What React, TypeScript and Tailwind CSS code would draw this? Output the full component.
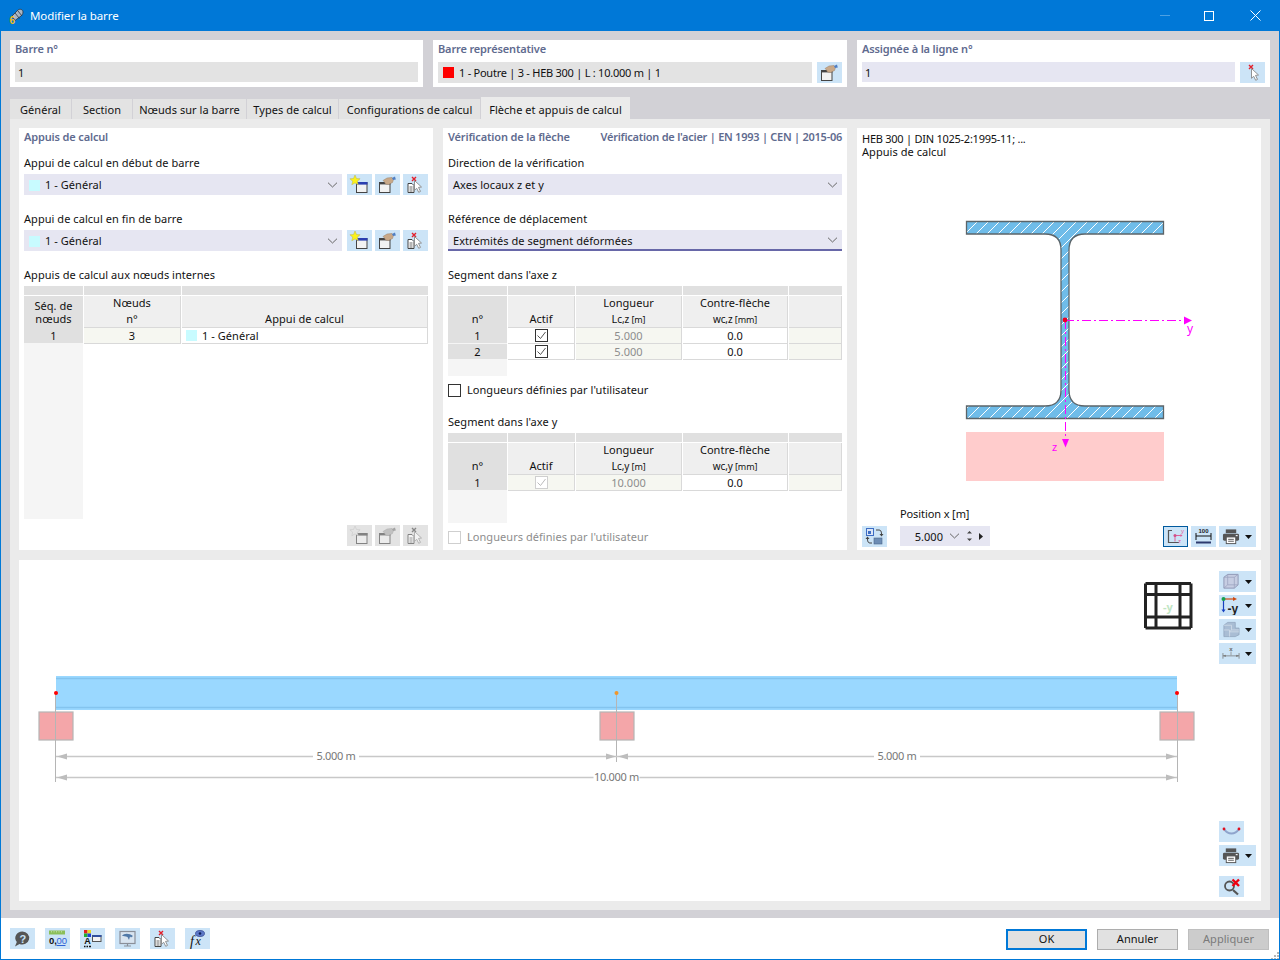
import React from "react";

const Chevron = () => (
  <svg width="11" height="6" viewBox="0 0 11 6" className="shrink-0"><path d="M1 .7 5.5 5 10 .7" fill="none" stroke="#666" strokeWidth="1" /></svg>
);
const Drop = () => (
  <svg width="7" height="4" viewBox="0 0 7 4" className="shrink-0"><path d="M0 0h7L3.500 4z" fill="#111" /></svg>
);

const IconNew = () => (
  <svg width="25" height="21" viewBox="0 0 25 21">
    <rect x="9.5" y="8.5" width="10.5" height="10" fill="#f2f2f2" stroke="#444" />
    <rect x="9" y="8" width="11.5" height="2.6" fill="#2b3fb0" />
    <path d="M8 1l1.5 3.5 3.6.3-2.8 2.4.9 3.6L8 8.9l-3.2 1.9.9-3.6-2.8-2.4 3.6-.3z" fill="#fbf21a" stroke="#b9b34a" strokeWidth=".5" />
  </svg>
);
const IconEdit = () => (
  <svg width="25" height="21" viewBox="0 0 25 21">
    <rect x="4.5" y="8.5" width="10.5" height="10" fill="#f2f2f2" stroke="#444" />
    <rect x="4" y="8" width="11.5" height="2.4" fill="#444" />
    <path d="M8 6.5l4-2.5 5-.5 1.5 2-1 3-4 2-3-.5-1-2z" fill="#c8a888" stroke="#9a8068" strokeWidth=".5" />
    <path d="M17 4l3-1.5.8 3-2.8.5z" fill="#4f7fc4" />
  </svg>
);
const IconPick = ({ doc = true }: { doc?: boolean }) => (
  <svg width="25" height="21" viewBox="0 0 25 21">
    {doc && (
      <g>
        <path d="M5 9.5h4l2 2v7H5z" fill="#fff" stroke="#444" />
        <path d="M6.5 13h3M6.5 15h3M6.5 17h3" stroke="#444" strokeWidth=".8" />
      </g>
    )}
    <path d="M9 3l4 4M13 3l-4 4" stroke="#e4202c" strokeWidth="1.4" />
    <path d="M11.5 6.5l7 6.5-3 .4 2 4-1.8.9-2-4-2.2 2z" fill="#fff" stroke="#888" strokeWidth=".9" />
  </svg>
);
const IconRotate = () => (
  <svg width="25" height="21" viewBox="0 0 25 21">
    <rect x="4.5" y="2.5" width="7" height="7" fill="#dbe6f6" stroke="#3d6dc4" />
    <rect x="6" y="5" width="3" height="3" fill="#3d6dc4" />
    <rect x="12" y="12" width="8" height="6" fill="#6d8db5" stroke="#4a658a" strokeWidth=".6" />
    <path d="M14 4h3c1.500 0 2.500 1 2.500 4" fill="none" stroke="#444" />
    <path d="M17.500 8l2 2.500 2-2.500z" fill="#444" />
    <path d="M10 17H8c-1.500 0-2.500-1-2.500-4" fill="none" stroke="#444" />
    <path d="M3.500 13l2-2.500 2 2.500z" fill="#444" />
  </svg>
);
const IconAxes = () => (
  <svg width="23" height="19" viewBox="0 0 23 19">
    <path d="M8 3.500H4.500v12H15" fill="none" stroke="#555" strokeWidth="1.200" />
    <path d="M11 8.500h7M11 8.500v6" stroke="#e0609a" strokeWidth="1" />
    <circle cx="11" cy="8.500" r="1.500" fill="#d0508a" />
    <path d="M16.500 7l2 1.500-2 1.500z" fill="#e0609a" />
    <text x="17" y="5.500" fontSize="6" fill="#e0609a" fontFamily="Liberation Sans">y</text>
    <text x="14" y="16" fontSize="6" fill="#e0609a" fontFamily="Liberation Sans">z</text>
  </svg>
);
const IconDim = () => (
  <svg width="25" height="21" viewBox="0 0 25 21">
    <text x="12.500" y="6.500" textAnchor="middle" fontSize="6" fontWeight="700" fill="#222" fontFamily="Liberation Sans">100</text>
    <path d="M5 7v7M20 7v7M5 10h15" stroke="#111" strokeWidth="1" />
    <rect x="5" y="15.500" width="15" height="2" fill="#2d3a6e" />
  </svg>
);
const IconPrint = () => (
  <svg width="18" height="17" viewBox="0 0 19 17">
    <rect x="4" y="1" width="11" height="4" fill="#555" />
    <rect x="1" y="5.500" width="17" height="7.500" rx="1.500" fill="#555" />
    <rect x="14.500" y="7" width="2" height="1.200" fill="#fff" />
    <rect x="4.500" y="9" width="10" height="7" fill="#fff" stroke="#555" />
    <path d="M6.500 11.500h6M6.500 13.500h6" stroke="#555" />
  </svg>
);
const IconCube = () => (
  <svg width="18" height="17" viewBox="0 0 19 17">
    <path d="M2 4l4-3h11v11l-4 3.500H2z" fill="#c6cde2" stroke="#8f97b5" />
    <path d="M2 4h11v11.500M13 4l4-3M6 1v11H17M6 12l-4 3.500" fill="none" stroke="#9aa2be" strokeWidth=".8" />
  </svg>
);
const IconAxisY = () => (
  <svg width="20" height="19" viewBox="0 0 20 19">
    <path d="M2.500 3v11" stroke="#1540c0" strokeWidth="1.200" />
    <path d="M.5 13.500h4l-2 3z" fill="#1540c0" />
    <path d="M3 3h10" stroke="#d04a10" strokeWidth="1.200" />
    <path d="M12 1l4 2-4 2z" fill="#d04a10" />
    <circle cx="2.500" cy="3" r="2" fill="#18a050" />
    <text x="6.500" y="16.500" fontSize="12" fontWeight="700" fill="#222" fontFamily="Liberation Sans">-y</text>
  </svg>
);
const IconBlocks = () => (
  <svg width="18" height="17" viewBox="0 0 19 17">
    <path d="M2 4l4-3h8v6h4v7l-4 2H2z" fill="#a9bdd4" stroke="#90a4bc" strokeWidth=".8" />
    <path d="M2 4h8v5h8M10 9l-2 2h10M2 9h6v7" fill="none" stroke="#d5dfea" strokeWidth=".8" />
  </svg>
);
const IconMeasure = () => (
  <svg width="18" height="17" viewBox="0 0 19 17">
    <text x="9.500" y="6" textAnchor="middle" fontSize="6.500" fontWeight="700" fill="#666" fontFamily="Liberation Sans">x</text>
    <path d="M1 8v6M18 8v6M1 11h17" stroke="#777" strokeWidth=".8" />
    <path d="M1 11l3-1.200v2.400zM18 11l-3-1.200v2.400z" fill="#777" />
    <path d="M9.500 6.500v4" stroke="#888" strokeWidth=".8" />
  </svg>
);
const IconCurve = () => (
  <svg width="25" height="21" viewBox="0 0 25 21">
    <path d="M5 8c4 6 11 6 15 0" fill="none" stroke="#8fa4cc" strokeWidth="2" />
    <circle cx="5" cy="8" r="1.400" fill="#e01020" />
    <circle cx="20" cy="8" r="1.400" fill="#e01020" />
  </svg>
);
const IconZoomX = () => (
  <svg width="25" height="21" viewBox="0 0 25 21">
    <circle cx="10.500" cy="10" r="4.500" fill="none" stroke="#555" strokeWidth="1.800" />
    <path d="M14 14l5 4.500" stroke="#555" strokeWidth="2.200" />
    <path d="M13.500 3.500l6.500 6.500M20 3.500L13.500 10" stroke="#ee0010" strokeWidth="2.400" />
  </svg>
);
const IconHelp = () => (
  <svg width="25" height="21" viewBox="0 0 25 21">
    <path d="M12.500 3.500a7 6.500 0 1 1-3 12.500L5 18.500l1.800-4.500a7 6.500 0 0 1 5.700-10.500z" fill="#555" />
    <text x="13" y="14.500" textAnchor="middle" fontSize="11" fontWeight="700" fill="#c9e2f7" fontFamily="Liberation Sans">?</text>
  </svg>
);
const IconUnits = () => (
  <svg width="25" height="21" viewBox="0 0 25 21">
    <rect x="4" y="2.500" width="16" height="4" fill="#8bbf5a" />
    <path d="M6.500 3v1.500M9 3v1.500M11.500 3v1.500M14 3v1.500M16.500 3v1.500" stroke="#cde3b4" strokeWidth=".7" />
    <text x="4" y="15.500" fontSize="9.500" fontWeight="700" fill="#111" fontFamily="Liberation Sans">0,</text>
    <text x="11.500" y="15.500" fontSize="9.500" fill="#2e62d6" fontFamily="Liberation Sans">00</text>
    <path d="M11.500 17.500h9" stroke="#2e62d6" />
  </svg>
);
const IconColors = () => (
  <svg width="25" height="21" viewBox="0 0 25 21">
    <rect x="4" y="2" width="3.500" height="3.500" fill="#e02020" />
    <rect x="7.500" y="2" width="3.500" height="3.500" fill="#e8d820" />
    <rect x="4" y="5.500" width="3.500" height="3.500" fill="#20b030" />
    <rect x="7.500" y="5.500" width="3.500" height="3.500" fill="#2040d0" />
    <text x="7.500" y="16" textAnchor="middle" fontSize="9" fontWeight="700" fill="#111" fontFamily="Liberation Sans">A</text>
    <path d="M4 18.500h1.500M6.500 18.500h1.500M9 18.500h2" stroke="#111" strokeWidth="1.500" />
    <rect x="12.500" y="7.500" width="8.500" height="6" fill="#f3f3f3" stroke="#555" />
    <rect x="12.500" y="7" width="9" height="2" fill="#3050a0" />
  </svg>
);
const IconScreen = () => (
  <svg width="25" height="21" viewBox="0 0 25 21">
    <rect x="5" y="3.500" width="15" height="12" fill="#d8e4f0" stroke="#8a8f99" strokeWidth="1.200" />
    <path d="M7 8c2-3 7-3 11 0l-2 1.500-1-1-1 3.500-1.500-3c-2-1-4-1-5.500-1z" fill="#5079a8" />
    <path d="M12.500 15.500v2M9 18h7" stroke="#8a8f99" strokeWidth="1.200" />
  </svg>
);
const IconFx = () => (
  <svg width="25" height="21" viewBox="0 0 25 21">
    <text x="5" y="18" fontSize="14" fontStyle="italic" fontFamily="Liberation Serif" fill="#111">f</text>
    <text x="10.500" y="17" fontSize="12" fontStyle="italic" fontFamily="Liberation Serif" fill="#111">x</text>
    <ellipse cx="15" cy="5.500" rx="4.500" ry="3" fill="#5d79c8" stroke="#2d3f8a" strokeWidth=".7" />
    <circle cx="15" cy="5.500" r="1.300" fill="#10205a" />
  </svg>
);

const Btn = ({ children, off = false, on = false }: { children: React.ReactNode; off?: boolean; on?: boolean }) => (
  <div className={"flex h-[21px] w-[25px] shrink-0 items-center justify-center overflow-hidden " + (off ? "bg-[#e3e3e3]" : on ? "border-[1.5px] border-[#005a9e] bg-[#cce4f7]" : "bg-[#cce4f7]")}>
    {off ? <div className="flex opacity-60 grayscale">{children}</div> : children}
  </div>
);
const DropBtn = ({ children }: { children: React.ReactNode }) => (
  <div className="flex h-[21px] w-[37px] shrink-0 items-center justify-between bg-[#cce4f7] pl-[1px] pr-[4px]">
    <div className="flex w-[22px] justify-center">{children}</div>
    <Drop />
  </div>
);
const Swatch = () => <span className="h-[11px] w-[11px] shrink-0 bg-[#c8fbff]" />;

const Label = ({ children }: { children: React.ReactNode }) => <div className="h-[15px] text-[11px] leading-[13px] text-[#111]">{children}</div>;
const Heading = ({ children, tight = false }: { children: React.ReactNode; tight?: boolean }) => <div className={"whitespace-nowrap text-[11px] font-semibold leading-[13px] text-[#5f6b8f] " + (tight ? "tracking-[-0.25px]" : "tracking-[-0.15px]")}>{children}</div>;

const Combo = ({ children, active = false }: { children: React.ReactNode; active?: boolean }) => (
  <div className={"flex h-[21px] min-w-0 flex-1 items-center bg-[#e6e6f2] pl-[5px] pr-[4px] text-[11px] text-[#111] " + (active ? "border-b-2 border-[#6767a8]" : "")}>
    <div className={"flex flex-1 items-center gap-[5px] " + (active ? "pt-[4px]" : "pt-[2px]")}>{children}</div>
    <Chevron />
  </div>
);

const TopGroup = ({ title, children }: { title: string; children: React.ReactNode }) => (
  <div className="h-[47px] bg-white px-[5px] pt-[2px]">
    <div className="h-[15px]"><Heading>{title}</Heading></div>
    <div className="mt-[5px] flex gap-[5px]">{children}</div>
  </div>
);

const Sub = ({ main, sub, unit }: { main: string; sub: string; unit: string }) => (
  <span className="text-[11px] tracking-[-0.1px]">
    {main}
    <span className="text-[10px]">{sub}</span>
    <span className="text-[9px]"> {unit}</span>
  </span>
);

const Check = ({ on = false, off = false }: { on?: boolean; off?: boolean }) => (
  <span className={"flex h-[13px] w-[13px] items-center justify-center border bg-white " + (off ? "border-[#cfcfcf]" : "border-[#333]")}>
    {on && (
      <svg width="11" height="11" viewBox="0 0 11 11"><path d="M1.500 5.500 4.500 8.500 9.500 2" fill="none" stroke={off ? "#bbb" : "#555"} strokeWidth="1" /></svg>
    )}
  </span>
);

const Strip = () => <div className="h-[9px] bg-[#e0e0e0]" />;

const Head = ({ top, bottom }: { top?: React.ReactNode; bottom?: React.ReactNode }) => (
  <div className="flex h-[32px] flex-col items-center justify-end border-b border-r border-[#d9d9d9] bg-[#efefef] text-[11px] leading-[16px] text-[#111]">
    {top && <div className="h-[16px]">{top}</div>}
    <div className="h-[16px]">{bottom}</div>
  </div>
);

const RowNum = ({ n }: { n: string }) => <div className="flex h-[16px] items-center justify-center border-b border-[#f5f5f5] bg-[#e0e0e0] pt-[1px] text-[11px] text-[#111]">{n}</div>;

const Cell = ({ children, tone = "white", className = "" }: { children?: React.ReactNode; tone?: "white" | "cream"; className?: string }) => (
  <div className={"flex h-[16px] items-center justify-center border-b border-r border-[#d9d9d9] text-[11px] " + (tone === "cream" ? "bg-[#f6f7f1] " : "bg-white ") + className}>{children}</div>
);

const SegmentTable = ({ axis, rows, fill }: { axis: string; rows: { n: string; len: string; off: boolean }[]; fill: string }) => (
  <div>
    <div className="grid grid-cols-[59px_67px_106px_105px_53px] gap-x-[1px]">
      <Strip /><Strip /><Strip /><Strip /><Strip />
      <div className="mt-[1px] flex h-[32px] items-end justify-center bg-[#e0e0e0] pb-[1px] text-[11px] leading-[16px] text-[#111]">n°</div>
      <div className="mt-[1px]"><Head bottom="Actif" /></div>
      <div className="mt-[1px]"><Head top="Longueur" bottom={<Sub main="L" sub={"c," + axis} unit="[m]" />} /></div>
      <div className="mt-[1px]"><Head top="Contre-flèche" bottom={<Sub main="" sub={"wc," + axis} unit="[mm]" />} /></div>
      <div className="mt-[1px]"><Head /></div>
      {rows.map((r) => (
        <React.Fragment key={r.n}>
          <RowNum n={r.n} />
          <Cell tone={r.off ? "cream" : "white"}><Check on off={r.off} /></Cell>
          <Cell tone="cream" className="pt-[2px] text-[#8d8d8d]">{r.len}</Cell>
          <Cell className="pt-[2px] text-[#111]">0.0</Cell>
          <Cell tone="cream" />
        </React.Fragment>
      ))}
    </div>
    <div className={"w-[59px] bg-[#f5f5f5] " + fill} />
  </div>
);

const SectionDrawing = () => (
  <svg width="404" height="346" viewBox="857 159 404 346" className="mt-[1px] block">
    <defs>
      <pattern id="hatch" width="11" height="11" patternUnits="userSpaceOnUse">
        <path d="M-1 12 12 -1" stroke="#fff" strokeWidth="1" />
      </pattern>
    </defs>
    <rect x="966" y="432" width="198" height="49" fill="#ffcccc" />
    <path d="M966.500 221.500H1163.500V234H1085Q1069 234 1069 250V390Q1069 406 1085 406H1163.500V418.500H966.500V406H1045Q1061 406 1061 390V250Q1061 234 1045 234H966.500Z" fill="#6fbce9" />
    <path d="M966.500 221.500H1163.500V234H1085Q1069 234 1069 250V390Q1069 406 1085 406H1163.500V418.500H966.500V406H1045Q1061 406 1061 390V250Q1061 234 1045 234H966.500Z" fill="url(#hatch)" stroke="#5c6468" strokeWidth="1.300" />
    <path d="M1065 320.500H1186" stroke="#ff00ff" strokeWidth="1" strokeDasharray="9 3 2 3" />
    <path d="M1184 316.500l8 4-8 4z" fill="#ff00ff" />
    <path d="M1065.500 320V440" stroke="#ff00ff" strokeWidth="1" strokeDasharray="9 3 2 3" />
    <path d="M1062 439h7l-3.500 8.500z" fill="#ff00ff" />
    <circle cx="1065" cy="320" r="2.400" fill="#ee0020" />
    <text x="1187" y="333" fontSize="12" fill="#ff00ff" fontFamily="Noto Sans">y</text>
    <text x="1052" y="451" fontSize="11" fill="#ff00ff" fontFamily="Noto Sans">z</text>
  </svg>
);

const DimLabel = ({ x, y, t }: { x: number; y: number; t: string }) => (
  <g>
    <rect x={x - 23} y={y - 7} width="46" height="14" fill="#fff" />
    <text x={x} y={y + 4} textAnchor="middle" fontSize="11" letterSpacing="-0.3" fill="#777" fontFamily="Noto Sans">{t}</text>
  </g>
);

const Support = ({ x }: { x: number }) => <rect x={x - 17} y="712" width="34" height="28" fill="#f4a6a9" stroke="#b5b5b5" strokeWidth="1.200" />;
const ArrowL = ({ x, y }: { x: number; y: number }) => <path d={`M${x} ${y}l10-3v6z`} fill="#bdbdbd" />;
const ArrowR = ({ x, y }: { x: number; y: number }) => <path d={`M${x} ${y}l-10-3v6z`} fill="#bdbdbd" />;

const BeamDrawing = () => (
  <svg width="1242" height="341" viewBox="19 560 1242 341" className="block">
    <rect x="56" y="676" width="1121" height="34" fill="#9ad8ff" />
    <path d="M56 678.500H1177M56 707.500H1177" stroke="#84c4ee" strokeWidth="1.500" />
    <Support x={56} /><Support x={617} /><Support x={1177} />
    <path d="M55.500 693V782M616.500 693V762M1177.500 693V782" stroke="#b5b5b5" strokeWidth="1" />
    <path d="M56 756.500H1177M56 777.500H1177" stroke="#c8c8c8" strokeWidth="1.500" />
    <ArrowL x={57} y={756.5} /><ArrowR x={616} y={756.5} /><ArrowL x={618} y={756.5} /><ArrowR x={1176} y={756.5} />
    <ArrowL x={57} y={777.5} /><ArrowR x={1176} y={777.5} />
    <DimLabel x={336} y={756} t="5.000 m" />
    <DimLabel x={897} y={756} t="5.000 m" />
    <DimLabel x={616.500} y={777} t="10.000 m" />
    <circle cx="56" cy="693" r="2" fill="#f00" />
    <circle cx="616.500" cy="693" r="2" fill="#f0962a" />
    <circle cx="1177" cy="693" r="2" fill="#f00" />
    <path d="M1145.500 583.500H1191M1145.500 594.500H1191M1145.500 617H1191M1145.500 628H1191M1145.500 583.500V628M1156 583.500V628M1180 583.500V628M1191 583.500V628" fill="none" stroke="#222" strokeWidth="3" />
    <text x="1168" y="611" textAnchor="middle" fontSize="11" fontWeight="700" fill="#bfe6c4" fontFamily="Noto Sans">-y</text>
  </svg>
);

const Tab = ({ children, w, active = false }: { children: string; w: string; active?: boolean }) => (
  <div className={"flex items-center justify-center text-[11px] text-[#111] " + w + (active ? " h-[22px] bg-[#ebebeb] pt-[4px]" : " h-[20px] bg-[#e3e3e3] pt-[2px]")}>{children}</div>
);

export default function App() {
  return (
    <div className="flex h-[960px] w-[1280px] flex-col overflow-hidden border-x border-b border-[#0078d7] bg-white font-['Noto_Sans','Liberation_Sans',sans-serif] tracking-[0.05px]">
      <div className="flex h-[31px] shrink-0 items-center bg-[#0078d7] pl-[8px]">
        <svg width="16" height="16" viewBox="0 0 16 16" className="shrink-0">
          <path d="M3 8l6-6c2-1.500 5-.5 5 2 0 2-1 3-2 4l-6 4.500z" fill="#aab6c4" stroke="#2c343f" strokeWidth=".8" />
          <path d="M6 5l4.500 5.500M9 3l4 5" stroke="#2c343f" strokeWidth=".8" />
          <text x="0.500" y="15.500" fontSize="10" fontWeight="700" fill="#efbc1c" fontFamily="Liberation Sans">6</text>
        </svg>
        <span className="ml-[5px] text-[11.5px] tracking-[-0.1px] text-white">Modifier la barre</span>
        <div className="ml-auto flex items-center">
          <div className="mr-[34px] h-px w-[10px] bg-[#4da1e3]" />
          <div className="mr-[36px] h-[10px] w-[10px] border border-white" />
          <svg width="11" height="11" viewBox="0 0 11 11" className="mr-[18px]"><path d="M.5.500l10 10M10.500.500l-10 10" stroke="#fff" strokeWidth="1" /></svg>
        </div>
      </div>

      <div className="flex flex-1 flex-col bg-[#d2d1d6] px-[9px] pb-[8px] pt-[9px]">
        <div className="grid grid-cols-[413px_414px_413px] gap-x-[10px]">
          <TopGroup title="Barre n°">
            <div className="flex h-[20px] flex-1 items-center bg-[#e3e3e3] pl-[3px] pt-[2px] text-[11px] text-[#111]">1</div>
          </TopGroup>
          <TopGroup title="Barre représentative">
            <div className="flex h-[21px] flex-1 items-center gap-[5px] bg-[#e3e3e3] pl-[5px] text-[11px] tracking-[-0.25px] text-[#111]">
              <span className="h-[11px] w-[11px] bg-[#f00]" /><span className="pt-[2px]">1 - Poutre | 3 - HEB 300 | L : 10.000 m | 1</span>
            </div>
            <Btn><IconEdit /></Btn>
          </TopGroup>
          <TopGroup title="Assignée à la ligne n°">
            <div className="flex h-[20px] flex-1 items-center bg-[#e6e6f2] pl-[3px] pt-[2px] text-[11px] text-[#111]">1</div>
            <Btn><IconPick doc={false} /></Btn>
          </TopGroup>
        </div>

        <div className="mt-[10px] flex h-[22px] items-end gap-[1px]">
          <Tab w="w-[61px]">Général</Tab>
          <Tab w="w-[60px]">Section</Tab>
          <Tab w="w-[113px]">Nœuds sur la barre</Tab>
          <Tab w="w-[91px]">Types de calcul</Tab>
          <Tab w="w-[141px]">Configurations de calcul</Tab>
          <Tab w="w-[149px]" active>Flèche et appuis de calcul</Tab>
        </div>

        <div className="flex flex-1 flex-col gap-[10px] bg-[#ebebeb] p-[9px]">
          <div className="grid h-[422px] grid-cols-[414px_404px_404px] gap-x-[10px]">
            <div className="flex flex-col bg-white px-[5px] pt-[2px]">
              <div className="h-[15px]"><Heading>Appuis de calcul</Heading></div>
              <div className="mt-[11px]"><Label>Appui de calcul en début de barre</Label></div>
              <div className="mt-[3px] flex gap-[3px]">
                <div className="mr-[2px] flex flex-1"><Combo><Swatch /><span>1 - Général</span></Combo></div>
                <Btn><IconNew /></Btn><Btn><IconEdit /></Btn><Btn><IconPick /></Btn>
              </div>
              <div className="mt-[17px]"><Label>Appui de calcul en fin de barre</Label></div>
              <div className="mt-[3px] flex gap-[3px]">
                <div className="mr-[2px] flex flex-1"><Combo><Swatch /><span>1 - Général</span></Combo></div>
                <Btn><IconNew /></Btn><Btn><IconEdit /></Btn><Btn><IconPick /></Btn>
              </div>
              <div className="mt-[17px]"><Label>Appuis de calcul aux nœuds internes</Label></div>
              <div className="mt-[3px]">
                <div className="grid grid-cols-[59px_97px_246px] gap-x-[1px]">
                  <Strip /><Strip /><Strip />
                  <div className="mt-[1px] flex h-[32px] items-center justify-center bg-[#e0e0e0] text-center text-[11px] leading-[13px] text-[#111]">Séq. de<br />nœuds</div>
                  <div className="mt-[1px]"><Head top="Nœuds" bottom="n°" /></div>
                  <div className="mt-[1px]"><Head bottom="Appui de calcul" /></div>
                  <RowNum n="1" />
                  <Cell tone="cream" className="pt-[2px] text-[#111]">3</Cell>
                  <Cell className="justify-start gap-[5px] pl-[4px] text-[#111]"><Swatch /><span className="pt-[2px]">1 - Général</span></Cell>
                </div>
                <div className="h-[175px] w-[59px] bg-[#f5f5f5]" />
              </div>
              <div className="mt-[6px] flex justify-end gap-[3px]">
                <Btn off><IconNew /></Btn><Btn off><IconEdit /></Btn><Btn off><IconPick /></Btn>
              </div>
            </div>

            <div className="flex flex-col bg-white px-[5px] pt-[2px]">
              <div className="flex h-[15px] justify-between"><Heading>Vérification de la flèche</Heading><Heading tight>Vérification de l'acier | EN 1993 | CEN | 2015-06</Heading></div>
              <div className="mt-[11px]"><Label>Direction de la vérification</Label></div>
              <div className="mt-[3px] flex"><Combo>Axes locaux z et y</Combo></div>
              <div className="mt-[17px]"><Label>Référence de déplacement</Label></div>
              <div className="mt-[3px] flex"><Combo active>Extrémités de segment déformées</Combo></div>
              <div className="mt-[17px]"><Label>Segment dans l'axe z</Label></div>
              <div className="mt-[3px]">
                <SegmentTable axis="z" fill="h-[16px]" rows={[{ n: "1", len: "5.000", off: false }, { n: "2", len: "5.000", off: false }]} />
              </div>
              <div className="mt-[7px] flex h-[15px] items-center gap-[6px]">
                <Check /><span className="text-[11px] text-[#111]">Longueurs définies par l'utilisateur</span>
              </div>
              <div className="mt-[17px]"><Label>Segment dans l'axe y</Label></div>
              <div className="mt-[3px]">
                <SegmentTable axis="y" fill="h-[32px]" rows={[{ n: "1", len: "10.000", off: true }]} />
              </div>
              <div className="mt-[7px] flex h-[15px] items-center gap-[6px]">
                <Check off /><span className="text-[11px] text-[#8d8d8d]">Longueurs définies par l'utilisateur</span>
              </div>
            </div>

            <div className="flex flex-col bg-white pt-[4px]">
              <div className="pl-[5px] text-[11px] leading-[13px] tracking-[-0.25px] text-[#111]">HEB 300 | DIN 1025-2:1995-11; ...<br /><span className="tracking-[0.05px]">Appuis de calcul</span></div>
              <SectionDrawing />
              <div className="ml-[43px] mt-[2px] h-[15px] text-[11px] leading-[13px] tracking-[-0.1px] text-[#111]">Position x [m]</div>
              <div className="mt-[4px] flex items-start px-[5px]">
                <Btn><IconRotate /></Btn>
                <div className="ml-[13px] flex h-[20px] w-[90px] items-center bg-[#e6e6f2] text-[11px] text-[#111]">
                  <span className="w-[43px] pt-[2px] text-right">5.000</span>
                  <span className="ml-[6px]"><Chevron /></span>
                  <svg width="7" height="12" viewBox="0 0 7 12" className="ml-[6px]"><path d="M3.500 1 6 3.500H1zM3.500 11 1 8.500h5z" fill="#444" /></svg>
                  <svg width="4" height="7" viewBox="0 0 4 7" className="ml-[6px]"><path d="M0 0l4 3.500L0 7z" fill="#222" /></svg>
                </div>
                <div className="ml-auto flex gap-[3px]">
                  <Btn on><IconAxes /></Btn>
                  <Btn><IconDim /></Btn>
                  <DropBtn><IconPrint /></DropBtn>
                </div>
              </div>
            </div>
          </div>

          <div className="relative flex-1 overflow-hidden bg-white">
            <BeamDrawing />
            <div className="absolute right-[5px] top-[11px] flex flex-col gap-[3px]">
              <DropBtn><IconCube /></DropBtn>
              <DropBtn><IconAxisY /></DropBtn>
              <DropBtn><IconBlocks /></DropBtn>
              <DropBtn><IconMeasure /></DropBtn>
            </div>
            <div className="absolute bottom-[4px] right-[5px] flex w-[37px] flex-col gap-[3px]">
              <Btn><IconCurve /></Btn>
              <DropBtn><IconPrint /></DropBtn>
              <div className="mt-[7px]"><Btn><IconZoomX /></Btn></div>
            </div>
          </div>
        </div>
      </div>

      <div className="relative flex h-[42px] shrink-0 items-start bg-white pl-[9px] pt-[10px]">
        <div className="flex gap-[10px]">
          <Btn><IconHelp /></Btn><Btn><IconUnits /></Btn><Btn><IconColors /></Btn><Btn><IconScreen /></Btn><Btn><IconPick /></Btn><Btn><IconFx /></Btn>
        </div>
        <div className="ml-auto mr-[10px] mt-[1px] flex gap-[10px]">
          <div className="flex h-[21px] w-[81px] items-center justify-center border-2 border-[#0078d7] bg-[#e1e1e1] text-[11px] text-[#111]">OK</div>
          <div className="flex h-[21px] w-[81px] items-center justify-center border border-[#adadad] bg-[#e1e1e1] text-[11px] text-[#111]">Annuler</div>
          <div className="flex h-[21px] w-[81px] items-center justify-center border border-[#bfbfbf] bg-[#cccccc] text-[11px] text-[#7a7a7a]">Appliquer</div>
        </div>
        <svg width="9" height="9" viewBox="0 0 9 9" className="absolute bottom-0 right-0">
          <path d="M7 1h2v2H7zM4 4h2v2H4zM7 4h2v2H7zM1 7h2v2H1zM4 7h2v2H4zM7 7h2v2H7z" fill="#b5b5b5" />
        </svg>
      </div>
    </div>
  );
}
